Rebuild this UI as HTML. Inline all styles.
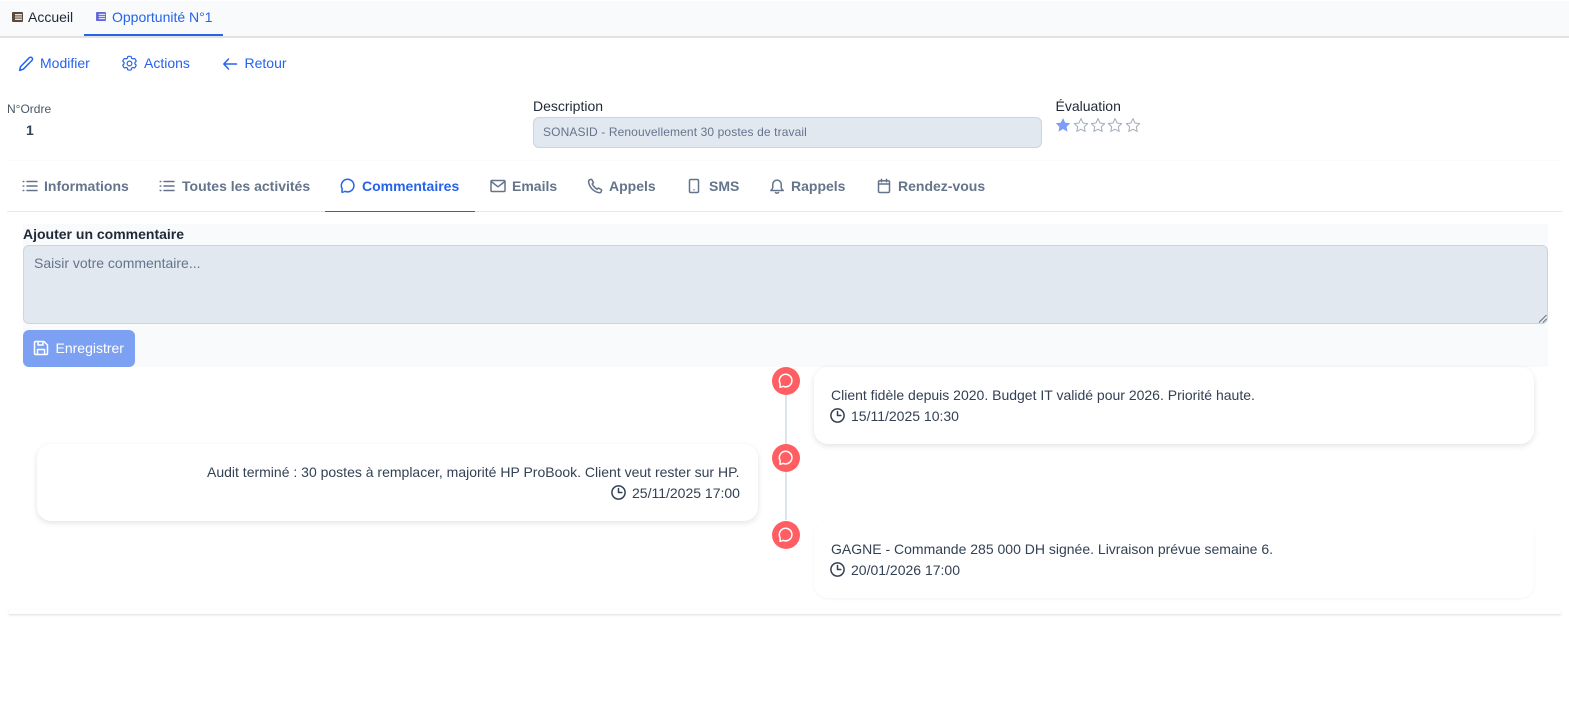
<!DOCTYPE html>
<html lang="fr"><head><meta charset="utf-8"><title>Opportunité</title>
<style>
html,body{margin:0;padding:0;background:#fff}
body{width:1569px;height:702px;position:relative;overflow:hidden;font-family:"Liberation Sans",Arial,sans-serif;font-size:14px;color:#334155}
.a{position:absolute;white-space:nowrap}
svg{position:absolute;fill:none;stroke:currentColor;stroke-width:1.5;stroke-linecap:round;stroke-linejoin:round}
.tab{font-weight:700;color:#64748b;line-height:16px;top:178px}
.ti{color:#64748b;top:178px;width:16px;height:16px}
.blue{color:#2563eb}
.card{position:absolute;background:#fff;border-radius:14px;box-shadow:0 2px 6px rgba(30,41,59,.13)}
.dot{position:absolute;left:772px;width:28px;height:28px;border-radius:50%;background:#ff5f63}
.dot svg{left:6px;top:6px;width:16px;height:16px;color:#fff}
.txt{line-height:16px;color:#334155}
</style></head><body>

<div class="a" style="left:0;top:1px;width:1569px;height:36px;background:#f8fafc"></div>
<div class="a" style="left:0;top:36px;width:1569px;height:2px;background:#e2e2e4"></div>
<div class="a" style="left:84px;top:34px;width:139px;height:2px;background:#2563eb"></div>
<svg style="left:12px;top:12px;width:11px;height:10px;stroke:none" viewBox="0 0 11 10"><rect width="11" height="10" rx="1" fill="#5a4a3c"/><rect x="3" y="2" width="7" height="1.4" fill="#e8e4dc"/><rect x="3" y="4.4" width="7" height="1.2" fill="#e8e4dc"/><rect x="3" y="6.6" width="7" height="1.4" fill="#e8e4dc"/></svg>
<div class="a" style="left:28px;top:9px;line-height:16px;color:#1f2937">Accueil</div>
<svg style="left:96px;top:12px;width:10px;height:9px;stroke:none" viewBox="0 0 11 10"><rect width="11" height="10" rx="1" fill="#6366d8"/><rect x="3" y="2" width="7" height="1.4" fill="#dfe3fa"/><rect x="3" y="4.4" width="7" height="1.2" fill="#dfe3fa"/><rect x="3" y="6.6" width="7" height="1.4" fill="#dfe3fa"/></svg>
<div class="a blue" style="left:112px;top:9px;line-height:16px">Opportunité N°1</div>

<svg class="blue" style="left:18px;top:56px;width:16px;height:16px" viewBox="0 0 16 16" stroke-width="1"><path d="M11.2 1.800a1.800 1.800 0 0 1 2.800 2.600L5.300 13.200 1.600 14.400l1-3.800z"/></svg>
<div class="a blue" style="left:40px;top:55px;line-height:16px">Modifier</div>
<svg class="blue" style="left:120px;top:54px;width:19px;height:19px" viewBox="0 0 24 24" stroke-width="1.500"><path d="M9.600 3.900c.1-.6.6-1 1.200-1h2.400c.6 0 1.100.4 1.200 1l.2 1.400 1.600.9 1.300-.5c.6-.2 1.200 0 1.500.5l1.200 2.100c.3.500.2 1.200-.3 1.500l-1.100.9v1.800l1.100.9c.5.300.6 1 .3 1.500l-1.200 2.100c-.3.500-.9.700-1.500.5l-1.300-.5-1.600.9-.2 1.400c-.1.600-.6 1-1.200 1h-2.400c-.6 0-1.100-.4-1.200-1l-.2-1.400-1.600-.9-1.300.5c-.6.2-1.200 0-1.500-.5l-1.200-2.100c-.3-.5-.2-1.200.3-1.500l1.100-.9v-1.800l-1.100-.9c-.5-.3-.6-1-.3-1.500l1.200-2.100c.3-.5.900-.7 1.500-.5l1.300.5 1.600-.9z"/><circle cx="12" cy="12" r="3"/></svg>
<div class="a blue" style="left:144px;top:55px;line-height:16px">Actions</div>
<svg class="blue" style="left:222px;top:56px;width:16px;height:16px" viewBox="0 0 16 16" stroke-width="1.100"><path d="M14.500 8H2M6.500 3 1.800 8l4.700 5"/></svg>
<div class="a blue" style="left:244.500px;top:55px;line-height:16px">Retour</div>

<div class="a" style="left:7px;top:102px;font-size:12px;line-height:14px;color:#4b5563">N°Ordre</div>
<div class="a" style="left:26px;top:122px;font-weight:700;line-height:16px;color:#334155">1</div>
<div class="a" style="left:533px;top:98px;line-height:16px;color:#1f2937">Description</div>
<div class="a" style="left:533px;top:117px;width:507px;height:29px;background:#e2e8f0;border:1px solid #cbd5e1;border-radius:6px"></div>
<div class="a" style="left:543px;top:125px;font-size:12px;line-height:14px;letter-spacing:.115px;color:#64748b">SONASID - Renouvellement 30 postes de travail</div>
<div class="a" style="left:1055.500px;top:98px;line-height:16px;color:#1f2937">Évaluation</div>
<svg style="left:1055px;top:117px;width:16px;height:16px;stroke:none;fill:#7c9ef5" viewBox="0 0 16 16"><path d="M8 1l2.200 4.600 5 .7-3.600 3.500.9 5L8 12l-4.500 2.800.9-5L.8 6.300l5-.7z"/></svg>
<svg style="left:1073px;top:117px;width:16px;height:16px;color:#a3acb9;stroke-width:1" viewBox="0 0 16 16"><path d="M8 1.600l2 4.400 4.700.6-3.400 3.200.9 4.600L8 12.200l-4.200 2.200.9-4.600L1.300 6.600 6 6z"/></svg>
<svg style="left:1090px;top:117px;width:16px;height:16px;color:#a3acb9;stroke-width:1" viewBox="0 0 16 16"><path d="M8 1.600l2 4.400 4.700.6-3.400 3.200.9 4.600L8 12.200l-4.200 2.200.9-4.600L1.300 6.600 6 6z"/></svg>
<svg style="left:1107px;top:117px;width:16px;height:16px;color:#a3acb9;stroke-width:1" viewBox="0 0 16 16"><path d="M8 1.600l2 4.400 4.700.6-3.400 3.200.9 4.600L8 12.200l-4.200 2.200.9-4.600L1.300 6.600 6 6z"/></svg>
<svg style="left:1125px;top:117px;width:16px;height:16px;color:#a3acb9;stroke-width:1" viewBox="0 0 16 16"><path d="M8 1.600l2 4.400 4.700.6-3.400 3.200.9 4.600L8 12.200l-4.200 2.200.9-4.600L1.300 6.600 6 6z"/></svg>
<div class="a" style="left:8px;top:160px;width:1553px;height:1px;background:#f9fafb"></div>

<svg class="ti" style="left:22px" viewBox="0 0 16 16" stroke-width="1"><path d="M5 3.500h10M5 8h10M5 12.500h10M1.200 3.500h.6M1.200 8h.6M1.200 12.500h.6"/></svg>
<div class="a tab" style="left:44px">Informations</div>
<svg class="ti" style="left:159px" viewBox="0 0 16 16" stroke-width="1"><path d="M5 3.500h10M5 8h10M5 12.500h10M1.200 3.500h.6M1.200 8h.6M1.200 12.500h.6"/></svg>
<div class="a tab" style="left:182px">Toutes les activités</div>
<svg class="ti blue" style="left:340px;color:#2563eb" viewBox="0 0 16 16" stroke-width="1"><path d="M2 14.200c1.200 0 2.200-.3 3-.9a6.300 6.300 0 1 0-2.900-2.700c.2.900-.2 2.400-.1 3.600z"/></svg>
<div class="a tab blue" style="left:362px;color:#2563eb">Commentaires</div>
<div class="a" style="left:7px;top:211px;width:1555px;height:1px;background:#e2e8f0"></div>
<div class="a" style="left:325px;top:211px;width:150px;height:1px;background:#2563eb"></div>
<svg class="ti" style="left:490px" viewBox="0 0 16 16" stroke-width="1"><rect x="1" y="2.500" width="14" height="11" rx="1"/><path d="M1.200 3.500 8 8.800l6.800-5.300"/></svg>
<div class="a tab" style="left:512px">Emails</div>
<svg class="ti" style="left:587px" viewBox="0 0 16 16" stroke-width="1"><path d="M4.600 1.300 3 1.600c-1 .4-1.600 1.200-1.400 2.400C2.500 9.500 6.500 13.500 12 14.700c1.100.2 2-.4 2.400-1.400l.2-1.400-3.200-1.900-1.400 1.300C8 9.800 6.200 8 5.200 6l1.300-1.400z"/></svg>
<div class="a tab" style="left:609px">Appels</div>
<svg class="ti" style="left:686px" viewBox="0 0 16 16" stroke-width="1"><rect x="3.500" y="1.500" width="9" height="13" rx="1.200"/><path d="M8 11.800h.01" stroke-width="1.500"/></svg>
<div class="a tab" style="left:709px">SMS</div>
<svg class="ti" style="left:769px" viewBox="0 0 16 16" stroke-width="1"><path d="M1.800 12.500c1.200-1 2-2 2-3.800V6.300a4.200 4.200 0 0 1 8.400 0v2.400c0 1.800.8 2.800 2 3.800zM6.500 14.600c.9.600 2.100.6 3 0"/></svg>
<div class="a tab" style="left:791px">Rappels</div>
<svg class="ti" style="left:875.500px" viewBox="0 0 16 16" stroke-width="1"><rect x="2.500" y="2.800" width="11" height="11.700" rx="1.200"/><path d="M2.500 6h11M5.500 1.300v2.500M10.500 1.300v2.500"/></svg>
<div class="a tab" style="left:898px">Rendez-vous</div>

<div class="a" style="left:23px;top:224px;width:1525px;height:143px;background:#f8fafc"></div>
<div class="a" style="left:23px;top:226px;font-weight:700;line-height:16px;color:#1f2937">Ajouter un commentaire</div>
<div class="a" style="left:23px;top:245px;width:1523px;height:77px;background:#e2e8f0;border:1px solid #cbd5e1;border-radius:6px"></div>
<div class="a" style="left:34px;top:255px;line-height:16px;color:#64748b">Saisir votre commentaire...</div>
<svg style="left:1539px;top:315px;width:8px;height:8px;color:#4b5563;stroke-width:.8" viewBox="0 0 8 8"><path d="M0 7.500 7.500 0M4 7.500 7.500 4"/></svg>
<div class="a" style="left:23px;top:330px;width:112px;height:37px;background:#7ca1f3;border-radius:6px"></div>
<svg style="left:33px;top:340px;width:16px;height:16px;color:#fff" viewBox="0 0 16 16" stroke-width="1.300"><path d="M2.500 1.500h8.500l3.500 3.500v8.300c0 .7-.5 1.200-1.200 1.200H2.700c-.7 0-1.200-.5-1.200-1.200V2.700c0-.7.5-1.200 1-1.200zM5 1.700v3.300h5V1.700M4.500 14.300V9.500h7v4.800"/></svg>
<div class="a" style="left:55.500px;top:340px;line-height:16px;color:#fff">Enregistrer</div>

<div class="a" style="left:785px;top:395px;width:2px;height:125px;background:#dde4f0"></div>
<div class="card" style="left:814px;top:367px;width:720px;height:77px"></div>
<div class="dot" style="top:367px"><svg viewBox="0 0 16 16" stroke-width="1.300"><path d="M2 14.200c1.200 0 2.200-.3 3-.9a6.300 6.300 0 1 0-2.900-2.700c.2.900-.2 2.400-.1 3.600z"/></svg></div>
<div class="a txt" style="left:831px;top:387px">Client fidèle depuis 2020. Budget IT validé pour 2026. Priorité haute.</div>
<svg style="left:830px;top:407.500px;width:15px;height:15px;color:#334155" viewBox="0 0 15 15" stroke-width="1.100"><circle cx="7.500" cy="7.500" r="6.600"/><path d="M7.500 3.500v4h3.300"/></svg>
<div class="a txt" style="left:851px;top:408px">15/11/2025 10:30</div>

<div class="card" style="left:37px;top:444px;width:721px;height:77px"></div>
<div class="dot" style="top:444px"><svg viewBox="0 0 16 16" stroke-width="1.300"><path d="M2 14.200c1.200 0 2.200-.3 3-.9a6.300 6.300 0 1 0-2.900-2.700c.2.900-.2 2.400-.1 3.600z"/></svg></div>
<div class="a txt" style="right:829.500px;top:464px">Audit terminé : 30 postes à remplacer, majorité HP ProBook. Client veut rester sur HP.</div>
<svg style="left:611px;top:484.500px;width:15px;height:15px;color:#334155" viewBox="0 0 15 15" stroke-width="1.100"><circle cx="7.500" cy="7.500" r="6.600"/><path d="M7.500 3.500v4h3.300"/></svg>
<div class="a txt" style="left:632px;top:485px">25/11/2025 17:00</div>

<div class="card" style="left:814px;top:521px;width:720px;height:77px;box-shadow:0 1px 3px rgba(30,41,59,.05)"></div>
<div class="dot" style="top:521px"><svg viewBox="0 0 16 16" stroke-width="1.300"><path d="M2 14.200c1.200 0 2.200-.3 3-.9a6.300 6.300 0 1 0-2.900-2.700c.2.900-.2 2.400-.1 3.600z"/></svg></div>
<div class="a txt" style="left:831px;top:541px">GAGNE - Commande 285 000 DH signée. Livraison prévue semaine 6.</div>
<svg style="left:830px;top:561.500px;width:15px;height:15px;color:#334155" viewBox="0 0 15 15" stroke-width="1.100"><circle cx="7.500" cy="7.500" r="6.600"/><path d="M7.500 3.500v4h3.300"/></svg>
<div class="a txt" style="left:851px;top:562px">20/01/2026 17:00</div>

<div class="a" style="left:9px;top:610px;width:1552px;height:4px;background:#fff;box-shadow:0 1px 2px rgba(30,41,59,.16)"></div>
</body></html>
